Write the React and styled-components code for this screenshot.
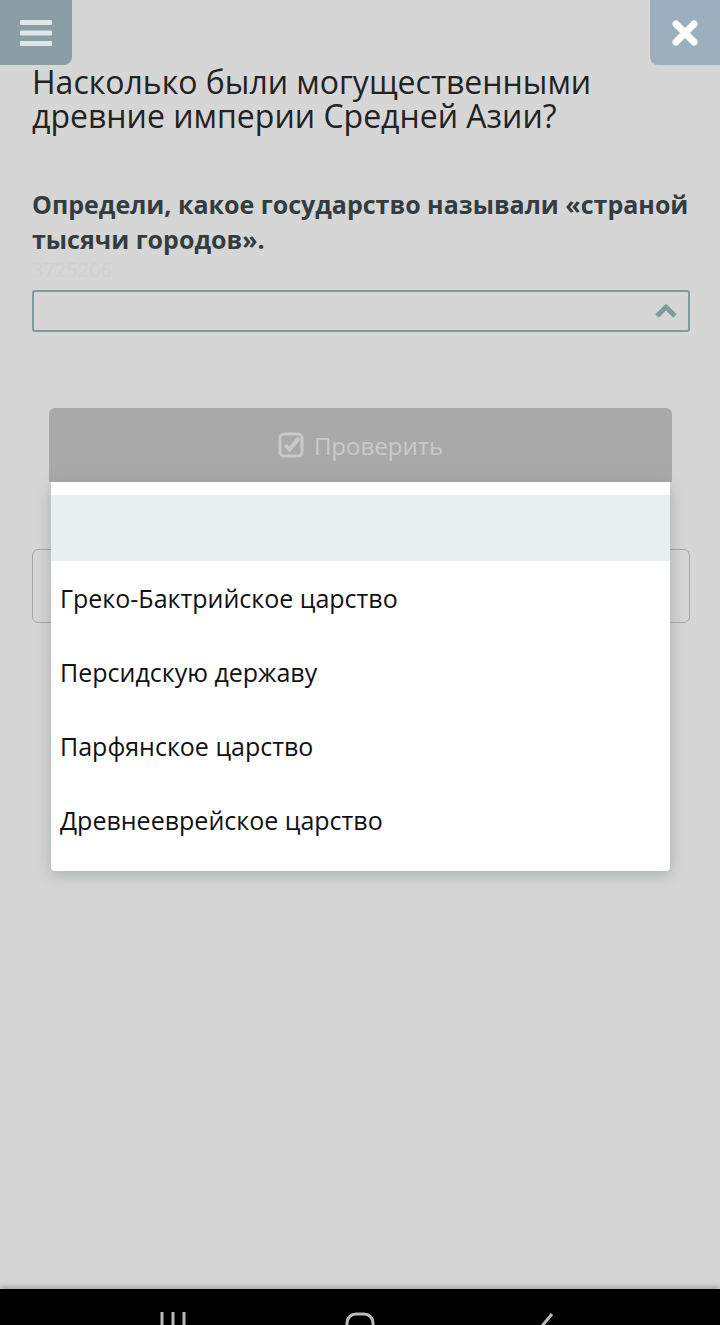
import React from 'react';
import styled, { createGlobalStyle } from 'styled-components';

const GlobalStyle = createGlobalStyle`
  html, body {
    margin: 0;
    padding: 0;
    background: #d6d6d6;
  }
  body {
    font-family: 'Open Sans', 'Noto Sans', sans-serif;
  }
`;

const Page = styled.div`
  position: relative;
  width: 720px;
  height: 1325px;
  overflow: hidden;
  background: #d6d6d6;
  display: flex;
  flex-direction: column;
`;

const TopBar = styled.div`
  display: flex;
  justify-content: space-between;
  height: 65px;
`;

const CornerButton = styled.div`
  width: ${p => p.width}px;
  height: 65px;
  background: ${p => p.bg};
  border-bottom-${p => (p.side === 'left' ? 'right' : 'left')}-radius: 8px;
  display: flex;
  align-items: center;
  justify-content: center;
`;

const Content = styled.div`
  padding: 0 28px 0 32px;
  display: flex;
  flex-direction: column;
  flex: 1;
`;

const Title = styled.h1`
  margin: 0;
  font-weight: 400;
  font-size: 32px;
  line-height: 34px;
  color: #222;
`;

const Question = styled.p`
  margin: 54px 0 0;
  font-weight: 700;
  font-size: 25px;
  line-height: 35px;
  color: #353c40;
`;

const TaskId = styled.div`
  font-size: 20px;
  line-height: 22px;
  color: #d1d1d1;
  margin-top: 2px;
  height: 31px;
`;

const Select = styled.div`
  height: 38px;
  margin-right: 2px;
  border: 2px solid #7f9b9b;
  border-radius: 3px;
  display: flex;
  align-items: center;
  justify-content: flex-end;
  padding-right: 10px;
`;

const CheckButton = styled.div`
  margin: 76px 20px 0 17px;
  height: 74px;
  background: #a9a9a9;
  border-radius: 6px 6px 0 0;
  display: flex;
  align-items: center;
  justify-content: center;
  gap: 10px;
  color: #c9c9c9;
  font-size: 24px;
`;

const HiddenBox = styled.div`
  margin-top: 67px;
  margin-right: 2px;
  height: 72px;
  border: 1px solid #a6a6a6;
  border-radius: 6px;
`;

const Dropdown = styled.ul`
  position: absolute;
  top: 482px;
  left: 51px;
  width: 619px;
  height: 389px;
  margin: 0;
  padding: 13px 0 0;
  list-style: none;
  background: #fff;
  border-radius: 0 0 4px 4px;
  box-shadow: 0 4px 16px rgba(80, 100, 100, 0.35);
  box-sizing: border-box;
`;

const Option = styled.li`
  height: ${p => (p.empty ? 66 : 74)}px;
  background: ${p => (p.active ? '#e8eff1' : '#fff')};
  padding-left: 9px;
  display: flex;
  align-items: center;
  font-size: 25px;
  color: #111;
`;

const NavBar = styled.div`
  height: 36px;
  background: #000;
  box-shadow: 0 -3px 5px rgba(0, 0, 0, 0.2);
  display: flex;
  justify-content: center;
  align-items: flex-start;
  gap: 157px;
  padding-top: 23px;
  box-sizing: border-box;
  overflow: hidden;
`;

const options = [
  'Греко-Бактрийское царство',
  'Персидскую державу',
  'Парфянское царство',
  'Древнееврейское царство',
];

export default function App() {
  return (
    <Page>
      <GlobalStyle />
      <TopBar>
        <CornerButton width={72} bg="#8a9ea6" side="left">
          <svg width="34" height="30" viewBox="0 0 34 30">
            <rect x="1" y="2" width="32" height="5" rx="1" fill="#dfe6e7" />
            <rect x="1" y="12.5" width="32" height="5" rx="1" fill="#dfe6e7" />
            <rect x="1" y="23" width="32" height="5" rx="1" fill="#dfe6e7" />
          </svg>
        </CornerButton>
        <CornerButton width={70} bg="#9bb0bc" side="right">
          <svg width="28" height="28" viewBox="0 0 28 28">
            <path d="M5 5 L23 23 M23 5 L5 23" stroke="#fff" strokeWidth="7" strokeLinecap="round" />
          </svg>
        </CornerButton>
      </TopBar>
      <Content>
        <Title>
          Насколько были могущественными
          <br />
          древние империи Средней Азии?
        </Title>
        <Question>
          Определи, какое государство называли «страной тысячи городов».
        </Question>
        <TaskId>3725206</TaskId>
        <Select>
          <svg width="24" height="16" viewBox="0 0 24 16">
            <path d="M3 13 L12 4 L21 13" stroke="#7f9b9b" strokeWidth="5" fill="none" strokeLinejoin="round" />
          </svg>
        </Select>
        <CheckButton>
          <svg width="26" height="26" viewBox="0 0 26 26">
            <rect x="2" y="2" width="22" height="22" rx="4" stroke="#c9c9c9" strokeWidth="3" fill="none" />
            <path d="M7 13 L11.5 17.5 L21 6" stroke="#c9c9c9" strokeWidth="4" fill="none" />
          </svg>
          Проверить
        </CheckButton>
        <HiddenBox />
      </Content>
      <NavBar>
        <svg width="30" height="20" viewBox="0 0 30 20">
          <path d="M4 0 V20 M15 0 V20 M26 0 V20" stroke="#bbb" strokeWidth="3" />
        </svg>
        <svg width="30" height="20" viewBox="0 0 30 20">
          <rect x="2" y="2" width="26" height="26" rx="9" stroke="#bbb" strokeWidth="3" fill="none" />
        </svg>
        <svg width="30" height="20" viewBox="0 0 30 20">
          <path d="M20 2 L10 14" stroke="#bbb" strokeWidth="3" fill="none" />
        </svg>
      </NavBar>
      <Dropdown>
        <Option empty active />
        {options.map(o => (
          <Option key={o}>{o}</Option>
        ))}
      </Dropdown>
    </Page>
  );
}
